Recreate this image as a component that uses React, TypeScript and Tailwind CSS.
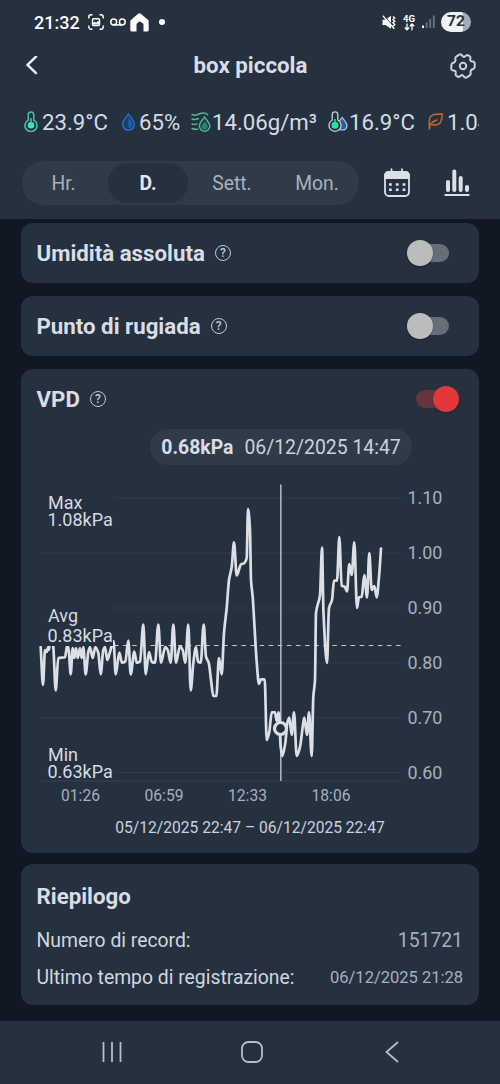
import type { ReactNode } from "react";

const SERIES =
  "40.7,647 43,685 45,650 46.7,652 48.3,647 49,650 50,640 52,640 53.3,647 55.7,690.5 58.3,658 65,657.3 67.3,645 68.7,650 70.7,674.3 72.7,648 74.3,658 76,648 77.7,658 80,648 81.7,658 83.3,647 85.7,674.3 88.3,652 90,647 92.7,658 95.3,647 98.3,653 100.7,674.3 103.3,650 105,647 107.3,660 110,652 113.5,641 115.7,674.3 119.3,652.7 122,662.7 125.3,661.7 128.3,640.5 130.7,674.3 134.3,651.7 136.7,662.7 140,661.7 143.3,624.5 145.7,674.3 149,652 151.7,661.7 155,662.7 158.3,624.5 161,662.7 165.3,647 167.7,650 170.7,662.7 173.3,624.5 176,662.7 180,646.5 182.7,650 185.3,662.7 188.3,624.5 190.7,690.5 193.3,663.3 196,647 198,661.7 200.7,662.7 203.7,624.5 206,656.7 208.7,662.7 211,680 213.3,696 216.3,696 219,658 221.7,674.3 224,633 226.7,608 229,580 231.7,567 234,542.3 236.7,575.5 241,564.3 244,563.3 246.7,558 248,509 250,530 251,580 252.7,597 254.3,623 256.7,662 259,684 261,679.3 264.7,679.3 266.7,740 269.3,732 271.7,712.3 275,712.3 276.7,721 278.7,712.3 280.7,747 282.3,756 285.3,743 287.3,723 289.3,717.5 291.7,735 294,712.3 296.7,756 300,747 302.7,727 304.3,717.5 307,735 309,712.3 311.7,756 313.3,697 315,680 316,613 320,595 322,547.5 323.5,613 327,663 329,608 332,600 334,580.7 337,580.7 339.3,537 341.7,585.7 344.7,586.7 347,591.5 349.3,564 351.7,575 354.3,542.3 357,608 359,597.3 361.7,596.7 364.3,575 367,597.3 369.3,553 371.7,590 374.3,586 376.7,597.3 379,577 381,548.5";

function smoothPath(series: string): string {
  const pts = series.split(" ").map((p) => p.split(",").map(Number));
  const slopes = pts.slice(1).map((p, i) => (p[1] - pts[i][1]) / (p[0] - pts[i][0]));
  const tangents = pts.map((_, i) => {
    const before = slopes[i - 1];
    const after = slopes[i];
    if (before === undefined) return after;
    if (after === undefined) return before;
    return before * after <= 0 ? 0 : (2 * before * after) / (before + after);
  });
  let d = `M${pts[0][0]} ${pts[0][1]}`;
  for (let i = 1; i < pts.length; i++) {
    const [x0, y0] = pts[i - 1];
    const [x1, y1] = pts[i];
    const h = (x1 - x0) / 3;
    d += `C${x0 + h} ${y0 + h * tangents[i - 1]} ${x1 - h} ${y1 - h * tangents[i]} ${x1} ${y1}`;
  }
  return d;
}

const LINE = smoothPath(SERIES);

function StatusBar() {
  return (
    <div className="flex h-[44px] shrink-0 items-center pl-[34px] pr-[29px] text-white">
      <span className="w-[54px] text-[18px] font-medium">21:32</span>
      <svg width="16" height="16" viewBox="0 0 16 16" fill="none" stroke="#fff" strokeWidth="1.4">
        <path d="M.8 4.5V3A2.2 2.2 0 0 1 3 .8h1.5M11.5.8H13A2.2 2.2 0 0 1 15.2 3v1.5M15.2 11.5V13a2.2 2.2 0 0 1-2.2 2.2h-1.5M4.5 15.2H3A2.2 2.2 0 0 1 .8 13v-1.5" />
        <rect x="4.5" y="4.7" width="7" height="6.8" rx="1.2" />
        <path d="M4.500 10.500v-1l2-2 1.500 1.200 2-1.900 1.500 1.500v2.200z" fill="#fff" stroke="none" />
      </svg>
      <svg className="ml-[6px]" width="16" height="9" viewBox="0 0 16 9" fill="none" stroke="#fff" strokeWidth="1.5">
        <circle cx="3.7" cy="4" r="2.9" />
        <circle cx="12.3" cy="4" r="2.9" />
        <path d="M3.7 6.900h8.600" />
      </svg>
      <svg className="ml-[4px]" width="19" height="19" viewBox="0 0 19 19" fill="#fff">
        <path d="M8.2.8a2 2 0 0 1 2.600 0l7 6a2.400 2.400 0 0 1 .9 1.900V17a1.500 1.500 0 0 1-1.500 1.500h-3.700v-7.200a1 1 0 0 0-.4-.8L9.500 8.200l-2.600 2.300a1 1 0 0 0-.4.8v7.200H1.800A1.500 1.500 0 0 1 .3 17V8.700a2.400 2.400 0 0 1 .9-1.900z" />
      </svg>
      <span className="ml-[10px] size-[6px] rounded-full bg-white" />
      <div className="ml-auto flex items-center">
        <svg width="14" height="15" viewBox="0 0 14 15">
          <path d="M.5 4.800h3L9 .8v13L3.500 10h-3z" fill="#fff" />
          <path d="M1.800.6l10.500 12" stroke="#263140" strokeWidth="1.200" />
          <path d="M.8.8l11.500 13" stroke="#fff" strokeWidth="1.300" />
          <path d="M11 1.500l1.700 1.500-1.700 1.500 1.700 1.700L11 7.800l1.700 1.700-1.700 1.700" fill="none" stroke="#fff" strokeWidth="1.400" />
        </svg>
        <div className="ml-[7px] flex w-[12px] flex-col items-center">
          <span className="text-[9.500px] leading-[9px] font-bold">4G</span>
          <svg width="11" height="8" viewBox="0 0 11 8" fill="none" stroke="#fff" strokeWidth="1.300">
            <path d="M3 .5v6M.8 4.500L3 6.800l2.200-2.300M8 7.300v-6M5.800 3.300L8 1l2.200 2.300" />
          </svg>
        </div>
        <svg className="ml-[7px]" width="13" height="14" viewBox="0 0 13 14">
          <rect x="0" y="10.500" width="2" height="2.500" fill="#fff" />
          <g fill="#66707d">
            <rect x="3.600" y="7.500" width="2" height="5.500" />
            <rect x="7.200" y="4" width="2" height="9" />
            <rect x="10.800" y=".5" width="2" height="12.500" />
          </g>
        </svg>
        <span className="ml-[6px] flex h-[20px] w-[30px] items-center justify-center rounded-full bg-[linear-gradient(90deg,#eff1f6_72%,#a6abb5_72%)] text-[15.5px] font-bold text-[#263140]">
          72
        </span>
      </div>
    </div>
  );
}

function TitleBar() {
  return (
    <div className="flex h-[44px] shrink-0 items-center justify-between pl-[24px] pr-[23px]">
      <svg width="28" height="20" viewBox="0 0 28 20" fill="none" stroke="#eceff4" strokeWidth="2.500" strokeLinecap="round" strokeLinejoin="round">
        <path d="M12 1.500L3.500 9.700 12 18" transform="translate(0 -.8)" />
      </svg>
      <h1 className="text-[22.300px] font-bold text-[#d8dde6]">box piccola</h1>
      <svg width="28" height="28" viewBox="0 0 28 28" fill="none" stroke="#ccd2dc" strokeWidth="2" strokeLinejoin="round">
        <path
          transform="rotate(30 14 14) translate(0 1)"
          d="M11.500 2.400Q12 1.200 13.200 1.200H14.800Q16 1.200 16.500 2.400L17 3.800Q17.500 5 18.800 4.700L21 4.100Q22.300 3.800 23 5L24.600 8.200Q25.200 9.600 24.300 10.500L23.500 11.500Q22.700 13 23.500 14.500L24.300 15.500Q25.200 16.400 24.600 17.800L23 21Q22.300 22.200 21 21.900L18.800 21.300Q17.500 21 17 22.200L16.500 23.600Q16 24.800 14.800 24.800H13.200Q12 24.800 11.500 23.600L11 22.200Q10.500 21 9.200 21.300L7 21.900Q5.700 22.200 5 21L3.400 17.800Q2.800 16.400 3.700 15.500L4.500 14.500Q5.300 13 4.500 11.500L3.700 10.500Q2.800 9.600 3.400 8.200L5 5Q5.700 3.800 7 4.100L9.200 4.700Q10.500 5 11 3.800Z"
        />
        <circle cx="14" cy="14" r="3.200" />
      </svg>
    </div>
  );
}

function Readings() {
  return (
    <div className="mr-[21px] flex h-[70px] shrink-0 items-center overflow-hidden pl-[24px] text-[22.200px] whitespace-nowrap text-[#d5dbe4]">
      <div className="flex w-[98px] shrink-0 items-center gap-[4px]">
        <svg className="-mt-[2px] shrink-0" width="14" height="21" viewBox="0 0 14 21" fill="none" stroke="#46c7a4">
          <path d="M4.200 9.200V3.700a2.800 2.800 0 0 1 5.600 0v5.500a6 6 0 1 1-5.600 0z" strokeWidth="1.500" />
          <circle cx="7" cy="14.200" r="3.300" fill="#46e0b8" stroke="none" />
          <path d="M7 7v6" strokeWidth="1.500" />
        </svg>
        23.9°C
      </div>
      <div className="flex w-[69px] shrink-0 items-center gap-[4px]">
        <svg className="-mt-[2px] shrink-0" width="13" height="18" viewBox="0 0 13 18">
          <path d="M6.500 1C8 3.500 12.300 7.500 12.300 11.300a5.800 5.800 0 0 1-11.600 0C.7 7.500 5 3.500 6.500 1z" fill="#123f6b" stroke="#2376cc" strokeWidth="1.400" />
          <path d="M6.500 4C7.600 6 10.300 8.800 10.300 11.300a3.800 3.800 0 0 1-3.800 3.800z" fill="#1c62ad" />
        </svg>
        65%
      </div>
      <div className="flex w-[137px] shrink-0 items-center gap-[1px]">
        <svg className="-mt-[2px] shrink-0" width="20" height="20" viewBox="0 0 20 20" fill="none" stroke="#4cb795" strokeWidth="1.500" strokeLinecap="round">
          <path d="M1 2.500c3 1.500 4.500 .5 7-.5s6-2 8.500.6M1 7c2.500 1.300 4 .6 6.500-.5M1 12c2 .9 3 .5 5-.2M1 16.500c2 1 3 .8 5.500.8" />
          <path d="M13.500 5c1.200 2.200 5.300 5.500 5.300 9a5.200 5.200 0 0 1-10.400 0c0-3.500 3.900-6.800 5.100-9z" fill="#263140" />
          <path d="M13.500 9c1 1.700 3.200 3.200 3.200 5.200a3.200 3.200 0 0 1-6.400 0z" fill="#2f806c" stroke="none" />
        </svg>
        14.06g/m³
      </div>
      <div className="flex w-[100px] shrink-0 items-center gap-[1px]">
        <svg className="-mt-[2px] shrink-0" width="20" height="21" viewBox="0 0 20 21">
          <path d="M14.200 6.500c1 1.800 4.800 4.800 4.800 8.300a4.900 4.900 0 0 1-9.700 0c0-3.500 3.900-6.500 4.900-8.300z" fill="#2b5c9c" stroke="#bcc6d4" strokeWidth="1.200" />
          <path d="M4.200 9V3.700a2.800 2.800 0 0 1 5.600 0V9a6 6 0 1 1-5.600 0z" fill="#263140" stroke="#c5cedb" strokeWidth="1.300" />
          <circle cx="7" cy="14.200" r="3.500" fill="#29e29c" />
          <path d="M7 8v6" stroke="#29e29c" strokeWidth="1.500" />
        </svg>
        16.9°C
      </div>
      <div className="flex shrink-0 items-center gap-[4px]">
        <svg className="-mt-[3px] shrink-0" width="15" height="17" viewBox="0 0 15 17" fill="none" stroke="#c4682a" strokeWidth="1.500" strokeLinecap="round" strokeLinejoin="round">
          <path d="M1.300 16V8.500C1.300 4 4 1.500 8 1.300L14.200 1c0 5-.6 11-6.700 11H4.500M1.300 16c.2-4.500 3.200-7.500 7.500-9" />
        </svg>
        1.04kPa
      </div>
    </div>
  );
}

function RangeBar() {
  return (
    <div className="flex h-[61px] shrink-0 items-start pt-[3px] pl-[22px]">
      <div className="flex h-[44px] w-[337px] items-center rounded-full bg-[#303b4a] text-[19.300px] text-[#a9b1be]">
        <span className="w-[86px] pt-[2px] pr-[3px] text-center">Hr.</span>
        <span className="flex h-[40px] w-[80px] items-center justify-center rounded-full bg-[#263140] pt-[2px] font-bold text-[#e3e7ee]">D.</span>
        <span className="w-[88px] pt-[2px] text-center">Sett.</span>
        <span className="w-[82px] pt-[2px] text-center">Mon.</span>
      </div>
      <svg className="mt-[7px] ml-[24px]" width="28" height="30" viewBox="0 0 28 30" fill="none" stroke="#dce0e6">
        <rect x="2" y="4" width="24" height="24" rx="4" strokeWidth="1.800" />
        <path d="M1.100 11V7.500a4.500 4.500 0 0 1 4.500-4.500h16.800a4.500 4.500 0 0 1 4.500 4.500V11z" fill="#dce0e6" stroke="none" />
        <path d="M8.500 1.200v3M19 1.200v3" strokeWidth="1.800" strokeLinecap="round" />
        <path d="M6 16.500h2.800m4 0h2.800m4 0h2.800M6 21.800h2.800m4 0h2.800m4 0h2.800" strokeWidth="2.600" />
      </svg>
      <svg className="mt-[7px] ml-[33px]" width="26" height="30" viewBox="0 0 26 30" stroke="#dce0e6" strokeLinecap="round">
        <path d="M4 14v8M10.300 3.500V22M16.700 10v12M23 19v3" strokeWidth="4" />
        <path d="M1.300 27h23.400" strokeWidth="2" />
      </svg>
    </div>
  );
}

function Switch({ on = false }: { on?: boolean }) {
  return on ? (
    <span className="flex h-[18px] w-[43px] items-center justify-end rounded-full bg-[#66343f]">
      <span className="size-[26px] shrink-0 rounded-full bg-[#e3383b] shadow-[0_1px_2px_rgba(0,0,0,0.3)]" />
    </span>
  ) : (
    <span className="mr-[10px] flex h-[18px] w-[42px] items-center rounded-full bg-[#666d7b]">
      <span className="size-[26px] shrink-0 rounded-full bg-[#bcbcbb] shadow-[0_1px_2px_rgba(0,0,0,0.3)]" />
    </span>
  );
}

function CardTitle({ label, on }: { label: string; on?: boolean }) {
  return (
    <div className="flex h-[60px] shrink-0 items-center pr-[20px] pl-[15.500px]">
      <h2 className="pt-px text-[22.250px] font-bold text-[#d8dde6]">{label}</h2>
      <span className="mt-[-1px] ml-[10px] flex size-[16px] items-center justify-center rounded-full border-[1.300px] border-[#c2c9d3] text-[12px] font-medium text-[#c2c9d3]">
        ?
      </span>
      <div className="ml-auto">
        <Switch on={on} />
      </div>
    </div>
  );
}

function Card({ className, children }: { className: string; children?: ReactNode }) {
  return <section className={`w-[458px] shrink-0 rounded-[12px] bg-[#263140] ${className}`}>{children}</section>;
}

const GRID = [
  { y: 498, label: "1.10", x: 114 },
  { y: 553, label: "1.00", x: 40 },
  { y: 608, label: "0.90", x: 112 },
  { y: 663, label: "0.80", x: 40 },
  { y: 718, label: "0.70", x: 40 },
  { y: 772.5, label: "0.60", x: 114 },
];

const TIMES = [
  { x: 80.5, label: "01:26" },
  { x: 164, label: "06:59" },
  { x: 247.5, label: "12:33" },
  { x: 331, label: "18:06" },
];

const STATS = [
  { y: 508.5, name: "Max", value: "1.08kPa", dy: 17 },
  { y: 622, name: "Avg", value: "0.83kPa", dy: 19.5 },
  { y: 760.5, name: "Min", value: "0.63kPa", dy: 17 },
];

function Chart() {
  return (
    <svg width="458" height="336" viewBox="21 474 458 336" fill="none" className="block">
      {GRID.map((g) => (
        <g key={g.label}>
          <path d={`M${g.x} ${g.y}H401`} stroke="#303b4b" strokeWidth="1" />
          <text x="407.500" y={g.y + 6} fontSize="17.900" fill="#a6afbc">{g.label}</text>
        </g>
      ))}
      <path d="M40 781H401" stroke="#354051" strokeWidth="1" />
      <path d="M114 645.500H402" stroke="#c3cad5" strokeWidth="1.200" strokeDasharray="4.500 4.600" />
      <path d="M280.800 484.500V781" stroke="#b4bbc7" strokeWidth="1.500" />
      <path d={LINE} stroke="#dce0e6" strokeWidth="2.700" strokeLinejoin="round" strokeLinecap="round" />
      <circle cx="280.500" cy="728.500" r="6" fill="#263140" stroke="#dce0e6" strokeWidth="3.200" />
      <rect x="39" y="610" width="74" height="36" fill="#263140" />
      {STATS.map((s) => (
        <g key={s.name} fontSize="18" fill="#d5dbe4">
          <text x="48" y={s.y}>{s.name}</text>
          <text x="47.500" y={s.y + s.dy}>{s.value}</text>
        </g>
      ))}
      {TIMES.map((t) => (
        <text key={t.label} x={t.x} y="801" fontSize="15.600" textAnchor="middle" fill="#a6afbc">{t.label}</text>
      ))}
    </svg>
  );
}

function NavBar() {
  return (
    <nav className="flex h-[63px] shrink-0 items-center bg-[#263140] pl-[102px] pb-[2px]">
      <svg width="20" height="22" viewBox="0 0 20 22" stroke="#b6bdc8" strokeWidth="1.800">
        <path d="M1.500 1v20M10 1v20M18.500 1v20" />
      </svg>
      <svg className="ml-[119px]" width="22" height="22" viewBox="0 0 22 22" fill="none" stroke="#b6bdc8" strokeWidth="1.800">
        <rect x="1" y="1" width="20" height="20" rx="6.500" />
      </svg>
      <svg className="ml-[122px]" width="15" height="22" viewBox="0 0 15 22" fill="none" stroke="#b6bdc8" strokeWidth="1.800">
        <path d="M13 1L1.500 11 13 21" />
      </svg>
    </nav>
  );
}

export default function App() {
  return (
    <div className="flex h-[1084px] w-[500px] flex-col overflow-hidden bg-[#111823] font-['Roboto',sans-serif]">
      <header className="flex h-[219px] shrink-0 flex-col bg-[#263140]">
        <StatusBar />
        <TitleBar />
        <Readings />
        <RangeBar />
      </header>
      <main className="flex flex-1 flex-col items-center overflow-hidden pt-[4px]">
        <Card className="h-[60px]">
          <CardTitle label="Umidità assoluta" />
        </Card>
        <Card className="mt-[13px] h-[60px]">
          <CardTitle label="Punto di rugiada" />
        </Card>
        <Card className="mt-[13px] flex h-[484px] flex-col">
          <CardTitle label="VPD" on />
          <div className="ml-[129px] flex h-[36px] w-[262px] shrink-0 items-center justify-center gap-[11px] rounded-full bg-[#303b4a] pt-[2px] text-[19.400px] whitespace-nowrap text-[#cbd2dc]">
            <b className="text-[#d8dde6]">0.68kPa</b>
            <span>06/12/2025 14:47</span>
          </div>
          <div className="mt-[9px]">
            <Chart />
          </div>
          <p className="mt-[6px] text-center text-[15.600px] leading-[24px] text-[#cbd2dc]">05/12/2025 22:47 – 06/12/2025 22:47</p>
        </Card>
        <Card className="mt-[11px] h-[141px] pr-[16px] pl-[15.500px] text-[#d0d6df]">
          <h2 className="pt-[16px] text-[22.250px] leading-[32px] font-bold text-[#d8dde6]">Riepilogo</h2>
          <div className="mt-[11px] flex h-[36px] items-center justify-between text-[19.350px]">
            <span>Numero di record:</span>
            <span className="text-[#a6afbc]">151721</span>
          </div>
          <div className="flex h-[37px] items-center justify-between text-[19.350px]">
            <span>Ultimo tempo di registrazione:</span>
            <span className="pt-px text-[16.500px] text-[#a6afbc]">06/12/2025 21:28</span>
          </div>
        </Card>
      </main>
      <NavBar />
    </div>
  );
}
